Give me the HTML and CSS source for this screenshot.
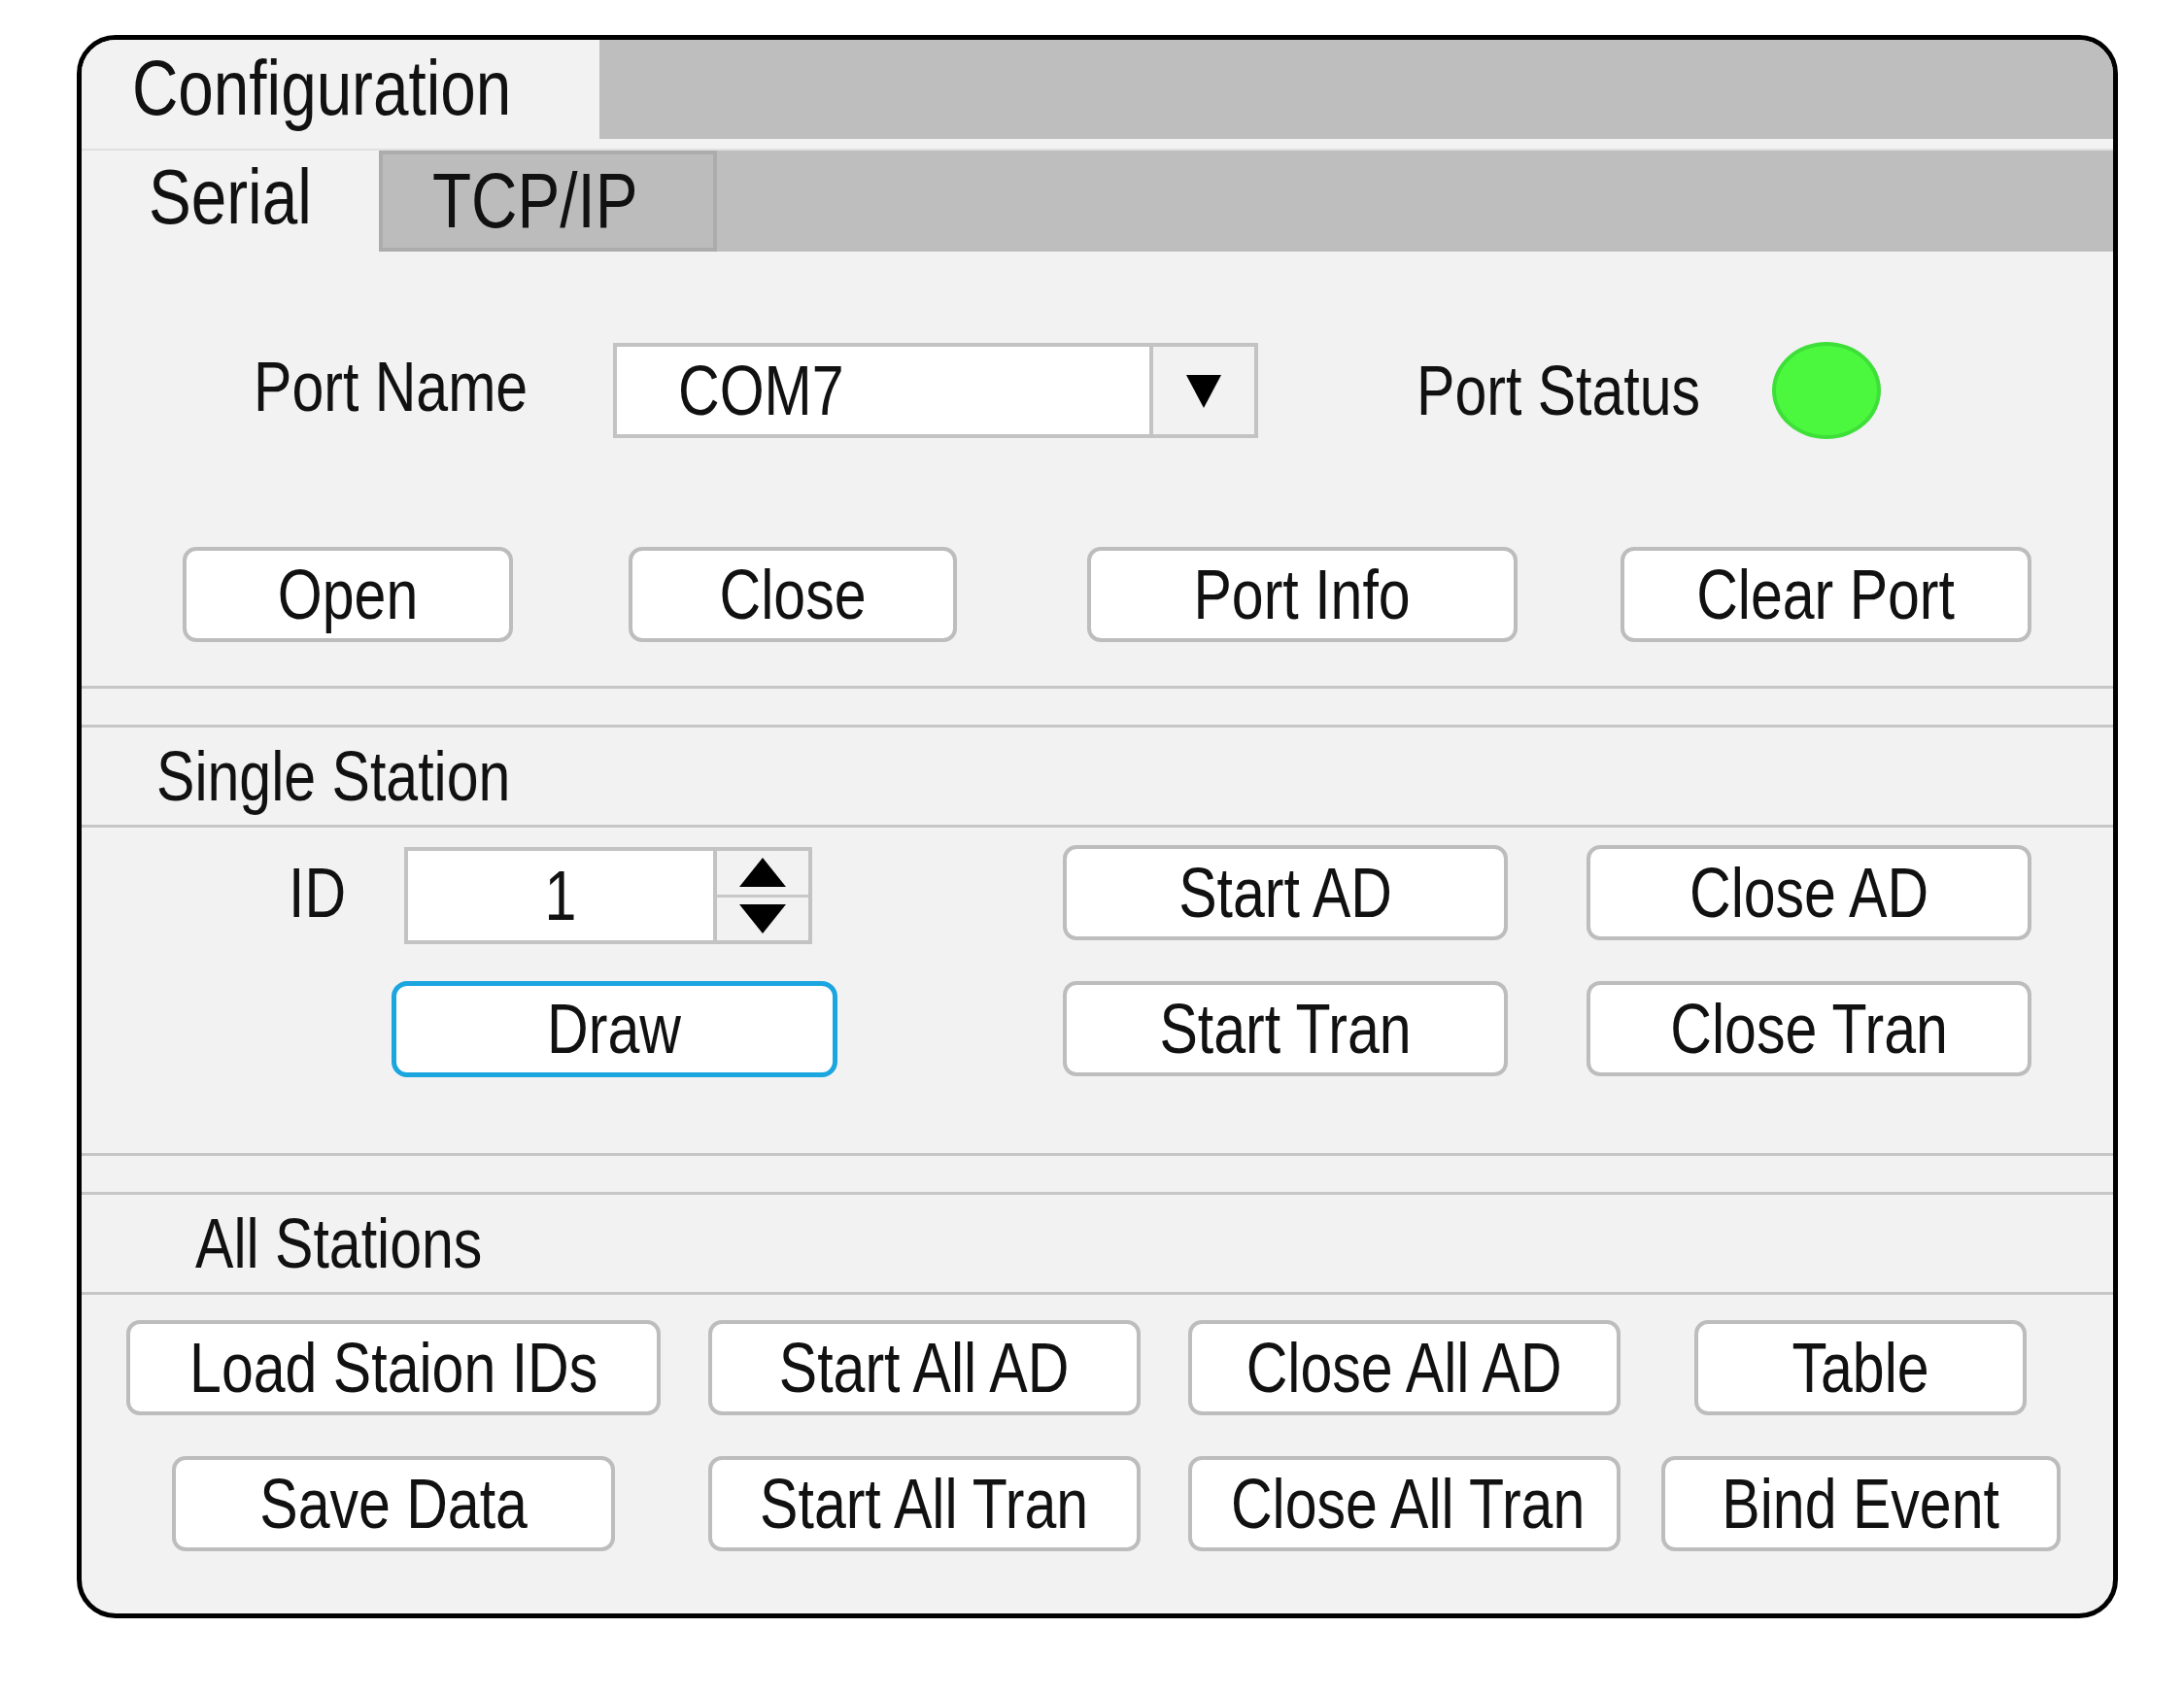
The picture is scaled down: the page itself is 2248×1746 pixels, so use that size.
FILE: index.html
```html
<!DOCTYPE html>
<html lang="en">
<head>
    <meta charset="UTF-8">
    <meta name="viewport" content="width=device-width, initial-scale=1.0">
    <title>Configuration</title>
    <link rel="stylesheet" href="styles.css">
</head>
<body>

    <div class="window">
        <div class="title-bar">
            <div class="title-tab"><span class="txt txt-left">Configuration</span></div>
        </div>

        <div class="tab-bar">
            <div class="tab tab-active"><span class="txt txt-left">Serial</span></div>
            <div class="tab tab-idle"><span class="txt txt-left">TCP/IP</span></div>
        </div>

        <div class="serial-pane">
            <div class="port-row">
                <span class="field-label port-label"><span class="txt txt-left">Port Name</span></span>
                <div class="combo">
                    <span class="combo-value"><span class="txt txt-left">COM7</span></span>
                    <span class="combo-arrow">
                        <svg width="40" height="40" viewBox="0 0 40 40"><polygon points="2,4 38,4 20,38" fill="#000"/></svg>
                    </span>
                </div>
                <span class="field-label status-label"><span class="txt txt-left">Port Status</span></span>
                <span class="led"></span>
            </div>

            <div class="port-buttons">
                <button class="btn btn-open"><span class="txt">Open</span></button>
                <button class="btn btn-close"><span class="txt">Close</span></button>
                <button class="btn btn-info"><span class="txt">Port Info</span></button>
                <button class="btn btn-clear"><span class="txt">Clear Port</span></button>
            </div>
        </div>

        <div class="divider"></div>
        <div class="section-title"><span class="txt txt-left">Single Station</span></div>

        <div class="single-grid">
            <div class="id-cell">
                <span class="field-label id-label"><span class="txt txt-left">ID</span></span>
                <div class="spin">
                    <span class="spin-value"><span class="txt">1</span></span>
                    <span class="spin-arrows">
                        <span class="spin-step">
                            <svg width="50" height="32" viewBox="0 0 50 32"><polygon points="25,1 49,31 1,31" fill="#000"/></svg>
                        </span>
                        <span class="spin-step">
                            <svg width="50" height="32" viewBox="0 0 50 32"><polygon points="1,1 49,1 25,31" fill="#000"/></svg>
                        </span>
                    </span>
                </div>
            </div>
            <button class="btn btn-wide"><span class="txt">Start AD</span></button>
            <button class="btn btn-wide"><span class="txt">Close AD</span></button>

            <div class="draw-cell">
                <button class="btn btn-wide btn-draw"><span class="txt">Draw</span></button>
            </div>
            <button class="btn btn-wide"><span class="txt">Start Tran</span></button>
            <button class="btn btn-wide"><span class="txt">Close Tran</span></button>
        </div>

        <div class="divider"></div>
        <div class="section-title section-title-all"><span class="txt txt-left">All Stations</span></div>

        <div class="all-grid">
            <button class="btn btn-load"><span class="txt">Load Staion IDs</span></button>
            <button class="btn btn-all"><span class="txt">Start All AD</span></button>
            <button class="btn btn-all"><span class="txt">Close All AD</span></button>
            <button class="btn btn-table"><span class="txt">Table</span></button>

            <button class="btn btn-save"><span class="txt">Save Data</span></button>
            <button class="btn btn-all"><span class="txt">Start All Tran</span></button>
            <button class="btn btn-all"><span class="txt">Close All Tran</span></button>
            <button class="btn btn-bind"><span class="txt">Bind Event</span></button>
        </div>
    </div>

</body>
</html>
```

FILE: styles.css
```css
body {
    margin: 0;
    background: #fff;
    font-family: 'Liberation Sans', Arial, sans-serif;
    color: #111;
}

/* Narrow look of the original UI font */
.txt {
    display: inline-block;
    white-space: nowrap;
    transform: scaleX(0.82);
}

.txt-left { transform-origin: left center; }

.window {
    box-sizing: border-box;
    width: 2101px;
    margin: 36px 0 0 79px;
    border: 5px solid #000;
    border-radius: 40px;
    background: #f2f2f2;
    overflow: hidden;
    font-size: 72px;
}

/* Top strips */
.title-bar {
    display: flex;
    height: 102px;
    background: #bebebe;
}

.title-tab {
    width: 481px;
    padding-left: 52px;
    background: #f2f2f2;
    font-size: 80px;
    line-height: 100px;
}

.tab-bar {
    display: flex;
    height: 106px;
    margin-top: 10px;
    background: #bebebe;
    border-top: 2px solid #e0e0e0;
    box-sizing: border-box;
}

.tab {
    box-sizing: border-box;
    font-size: 80px;
    line-height: 96px;
}

.tab-active {
    width: 306px;
    padding-left: 69px;
    background: #f2f2f2;
}

.tab-idle {
    width: 348px;
    padding-left: 51px;
    background: #bcbcbc;
    border: 4px solid #acacac;
}

/* Serial pane */
.serial-pane {
    padding: 94px 0 45px 0;
}

.port-row {
    display: flex;
    align-items: center;
    height: 98px;
    padding-left: 177px;
}

.field-label {
    display: block;
    white-space: nowrap;
}

.port-label { width: 370px; margin-top: -8px; }
.status-label { width: 366px; margin-left: 163px; }

.combo {
    box-sizing: border-box;
    display: flex;
    width: 664px;
    height: 98px;
    background: #fff;
    border: 4px solid #c3c3c3;
}

.combo-value {
    flex: 1;
    padding-left: 63px;
    line-height: 90px;
}

.combo-arrow {
    display: flex;
    align-items: center;
    justify-content: center;
    width: 104px;
    background: #f2f2f2;
    border-left: 4px solid #c3c3c3;
}

.led {
    box-sizing: border-box;
    width: 112px;
    height: 100px;
    border-radius: 50%;
    background: #4cf83e;
    border: 4px solid #3fdf3a;
}

.port-buttons {
    display: flex;
    margin-top: 112px;
    padding-left: 104px;
}

.btn {
    box-sizing: border-box;
    height: 98px;
    padding: 0;
    background: #fff;
    border: 4px solid #bdbdbd;
    border-radius: 14px;
    font-family: inherit;
    font-size: 72px;
    line-height: 1;
    color: #111;
    white-space: nowrap;
}

.btn-open { width: 340px; }
.btn-close { width: 338px; margin-left: 119px; }
.btn-info { width: 443px; margin-left: 134px; }
.btn-clear { width: 423px; margin-left: 106px; }

/* Section dividers and titles */
.divider {
    height: 37px;
    border-top: 3px solid #c6c6c6;
    border-bottom: 3px solid #c6c6c6;
}

.section-title {
    height: 100px;
    padding-left: 77px;
    line-height: 100px;
    border-bottom: 3px solid #c6c6c6;
}

.section-title-all { padding-left: 117px; }

/* Single station */
.single-grid {
    display: grid;
    grid-template-columns: 929px 458px 458px;
    grid-template-rows: 106px 102px;
    column-gap: 81px;
    row-gap: 36px;
    align-items: center;
    padding: 14px 0 77px 0;
}

.btn-wide { width: 458px; }

.id-cell {
    display: flex;
    align-items: center;
    padding-left: 213px;
}

.id-label { width: 119px; }

.spin {
    box-sizing: border-box;
    display: flex;
    width: 420px;
    height: 100px;
    margin-top: 6px;
    background: #fff;
    border: 4px solid #c3c3c3;
}

.spin-value {
    flex: 1;
    text-align: center;
    line-height: 92px;
}

.spin-arrows {
    display: flex;
    flex-direction: column;
    width: 94px;
    background: #f2f2f2;
    border-left: 4px solid #c3c3c3;
}

.spin-step {
    flex: 1;
    display: flex;
    align-items: center;
    justify-content: center;
}

.spin-step + .spin-step { border-top: 3px solid #c8c8c8; }

.draw-cell { padding-left: 319px; }

.btn-draw {
    width: 459px;
    height: 99px;
    border: 5px solid #1ba6e0;
    border-radius: 16px;
}

/* All stations */
.all-grid {
    display: grid;
    grid-template-columns: 600px 493px 494px 446px;
    row-gap: 42px;
    justify-items: center;
    padding: 26px 0 64px 21px;
}

.btn-load { width: 550px; }
.btn-all { width: 445px; }
.btn-table { width: 342px; }
.btn-save { width: 456px; }
.btn-bind { width: 411px; }
```
